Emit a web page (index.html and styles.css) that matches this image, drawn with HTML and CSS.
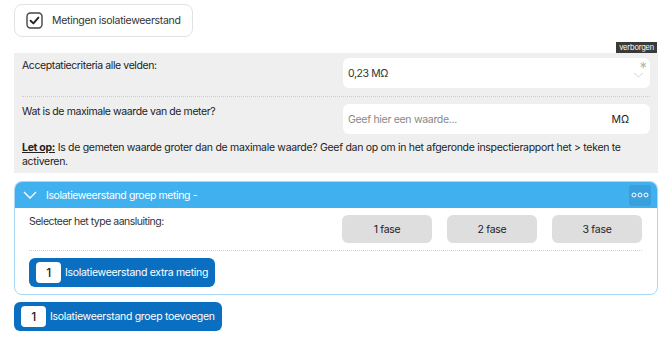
FILE: index.html
```html
<!DOCTYPE html>
<html lang="nl">
<head>
<meta charset="utf-8">
<title>Metingen isolatieweerstand</title>
<link rel="stylesheet" href="styles.css">
</head>
<body>
<div class="page">
  <div class="top-card">
    <span class="checkbox">
      <svg width="17" height="17" viewBox="0 0 17 17"><rect x="1" y="1" width="15" height="15" rx="3.5" fill="none" stroke="#444" stroke-width="1.4"/><path d="M4.6 8.7 L7.4 11.4 L12.4 5.6" fill="none" stroke="#222" stroke-width="1.9" stroke-linecap="round" stroke-linejoin="round"/></svg>
    </span>
    <span class="top-label">Metingen isolatieweerstand</span>
  </div>

  <div class="tag-row"><span class="tag">verborgen</span></div>

  <div class="panel">
    <div class="field-row">
      <div class="field-label">Acceptatiecriteria alle velden:</div>
      <div class="input">
        <span class="value">0,23 MΩ</span>
        <span class="req">*</span>
        <svg class="chev" width="11" height="6" viewBox="0 0 11 6"><path d="M1 1 L5.5 5 L10 1" fill="none" stroke="#d6d6d6" stroke-width="1"/></svg>
      </div>
    </div>
    <div class="sep"></div>
    <div class="field-row">
      <div class="field-label">Wat is de maximale waarde van de meter?</div>
      <div class="input">
        <span class="placeholder">Geef hier een waarde...</span>
        <span class="unit">MΩ</span>
      </div>
    </div>
    <p class="note"><span class="note-key">Let op:</span> Is de gemeten waarde groter dan de maximale waarde? Geef dan op om in het afgeronde inspectierapport het &gt; teken te activeren.</p>
  </div>

  <div class="acc">
    <div class="acc-head">
      <svg class="acc-chev" width="14" height="8" viewBox="0 0 14 8"><path d="M1 1 L7 7 L13 1" fill="none" stroke="#fff" stroke-width="1.3"/></svg>
      <span class="acc-title">Isolatieweerstand groep meting -</span>
      <span class="more">
        <svg width="18" height="6" viewBox="0 0 18 6"><circle cx="3" cy="3" r="2" fill="none" stroke="#fff" stroke-width="1"/><circle cx="9" cy="3" r="2" fill="none" stroke="#fff" stroke-width="1"/><circle cx="15" cy="3" r="2" fill="none" stroke="#fff" stroke-width="1"/></svg>
      </span>
    </div>
    <div class="acc-body">
      <div class="type-row">
        <div class="type-label">Selecteer het type aansluiting:</div>
        <div class="type-btns">
          <button class="type-btn">1 fase</button>
          <button class="type-btn">2 fase</button>
          <button class="type-btn">3 fase</button>
        </div>
      </div>
      <div class="sep sep-body"></div>
      <button class="blue-btn"><span class="count">1</span><span>Isolatieweerstand extra meting</span></button>
    </div>
  </div>

  <button class="blue-btn add-btn"><span class="count">1</span><span>Isolatieweerstand groep toevoegen</span></button>
</div>
</body>
</html>
```

FILE: styles.css
```css
* { box-sizing: border-box; }
body {
  margin: 0;
  background: #fff;
  font-family: Inter, "Open Sans", "Liberation Sans", sans-serif;
  color: #222;
  font-size: 10.5px;
}
.page {
  padding: 4px 12px 0 14px;
  width: 670px;
}
.top-card {
  display: inline-flex;
  align-items: center;
  gap: 9px;
  height: 33px;
  width: 179px;
  padding: 0 8px 0 11px;
  border: 1px solid #e2e2e2;
  border-radius: 8px;
  white-space: nowrap;
}
.checkbox { display: flex; }
.top-label { font-size: 10.5px; color: #333; letter-spacing: -0.3px; }

.tag-row {
  display: flex;
  justify-content: flex-end;
  margin-top: 5px;
  padding-right: 1px;
}
.tag {
  background: #3a3a3a;
  color: #fff;
  font-size: 7.5px;
  line-height: 11px;
  padding: 0 3px;
  letter-spacing: -0.2px;
}
.panel {
  background: #efefef;
  padding: 5px 8px 4px 8px;
}
.field-row {
  display: flex;
  justify-content: space-between;
  align-items: flex-start;
}
.field-label {
  padding-top: 1px;
  font-size: 10.5px;
  letter-spacing: -0.4px;
  color: #222;
}
.input {
  position: relative;
  width: 307px;
  height: 30px;
  background: #fff;
  border-radius: 6px;
  display: flex;
  align-items: center;
  padding: 0 6px 0 5px;
}
.value { font-size: 10.5px; color: #333; letter-spacing: -0.4px; }
.req {
  position: absolute;
  right: 3px;
  top: 2px;
  color: #b5b5b5;
  font-size: 15px;
  line-height: 15px;
}
.chev { position: absolute; right: 6px; top: 14px; }
.placeholder { font-size: 10.5px; color: #888; letter-spacing: -0.3px; }
.unit { margin-left: auto; margin-right: 15px; font-size: 10.5px; color: #222; }
.sep {
  border-top: 1px dotted #cdcdcd;
  margin: 8px 0 7px 0;
}
.note {
  margin: 7px 0 0 0;
  font-size: 10.5px;
  line-height: 14px;
  color: #222;
  letter-spacing: -0.3px;
}
.note-key { text-decoration: underline; font-weight: 700; }

.acc {
  margin-top: 8px;
  border: 1px solid #a8d8f6;
  border-radius: 8px;
  overflow: hidden;
}
.acc-head {
  background: #41b0ef;
  height: 26px;
  display: flex;
  align-items: center;
  padding: 0 6px 0 8px;
  color: #fff;
}
.acc-chev { margin-right: 9px; }
.acc-title { font-size: 10.5px; letter-spacing: -0.4px; }
.more {
  margin-left: auto;
  width: 22px;
  height: 21px;
  background: #3aa0dd;
  border-radius: 3px;
  display: flex;
  align-items: center;
  justify-content: center;
}
.acc-body {
  padding: 7px 15px 7px 14px;
}
.type-row {
  display: flex;
  justify-content: space-between;
  align-items: flex-start;
}
.type-label { font-size: 10.5px; color: #333; letter-spacing: -0.5px; padding-top: 0; }
.type-btns { display: flex; gap: 15px; }
.type-btn {
  width: 90px;
  height: 28px;
  border: 0;
  border-radius: 6px;
  background: #dedede;
  font-family: inherit;
  font-size: 10.5px;
  color: #222;
  letter-spacing: -0.3px;
}
.sep-body { margin: 7px 0 7px 0; }
.blue-btn {
  display: inline-flex;
  align-items: center;
  gap: 4px;
  height: 29px;
  padding: 0 7px 0 7px;
  border: 0;
  border-radius: 6px;
  background: #0a6fc0;
  color: #fff;
  font-family: inherit;
  font-size: 10.5px;
  letter-spacing: -0.3px;
}
.count {
  width: 25px;
  height: 21px;
  background: #fff;
  color: #222;
  border-radius: 4px;
  display: flex;
  align-items: center;
  justify-content: center;
  font-size: 12px;
  font-weight: 500;
}
.add-btn { margin-top: 7px; }
```
